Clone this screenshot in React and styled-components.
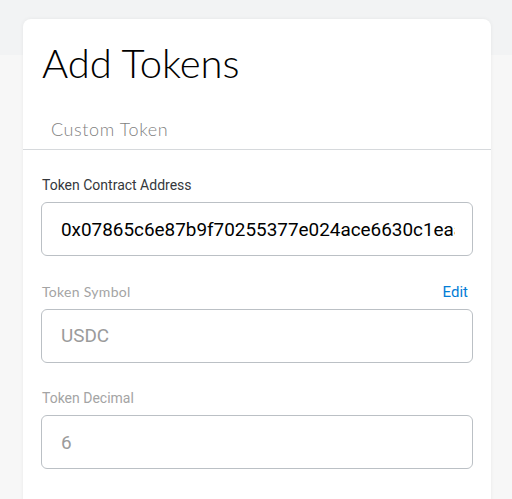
import React from 'react';
import styled, { createGlobalStyle } from 'styled-components';

const GlobalStyle = createGlobalStyle`
  html, body {
    margin: 0;
    padding: 0;
  }
  body {
    background: linear-gradient(#f2f3f4 0, #f2f3f4 55px, #f7f7f7 55px);
    min-height: 499px;
    overflow: hidden;
  }
`;

const Page = styled.div`
  padding: 19px 21px 0 23px;
`;

const Card = styled.section`
  background: #fff;
  border-radius: 8px 8px 0 0;
  box-shadow: 0 0 4px rgba(0, 0, 0, 0.06);
  min-height: 520px;
`;

const Header = styled.header`
  padding: 20px 19px 0;
`;

const Title = styled.h1`
  margin: 0;
  font-family: Lato, 'Noto Sans', sans-serif;
  font-weight: 300;
  font-size: 40px;
  line-height: 48px;
  color: #000;
`;

const Tabs = styled.nav`
  display: flex;
  margin-top: 32px;
  padding-left: 28px;
  border-bottom: 1px solid #d6d9dc;
`;

const Tab = styled.div`
  font-family: Lato, 'Noto Sans', sans-serif;
  font-weight: 300;
  font-size: 18px;
  letter-spacing: 0.6px;
  line-height: 20px;
  color: #7f7f7f;
  padding-bottom: 10px;
`;

const Form = styled.form`
  display: flex;
  flex-direction: column;
  gap: 27.5px;
  padding: 27px 18px 0;
`;

const Field = styled.div`
  display: flex;
  flex-direction: column;
  gap: 9px;
`;

const LabelRow = styled.div`
  display: flex;
  justify-content: space-between;
  align-items: center;
  padding: 0 5px 0 1px;
`;

const Label = styled.label`
  font-family: ${({ $geometric }) => ($geometric ? "Lato, 'Noto Sans'" : 'Roboto')}, sans-serif;
  font-size: 14px;
  letter-spacing: ${({ $geometric }) => ($geometric ? '0.3px' : '0')};
  line-height: 16px;
  color: ${({ $muted }) => ($muted ? '#a4a4a4' : '#35383c')};
`;

const EditLink = styled.a`
  font-family: Roboto, sans-serif;
  font-size: 15px;
  line-height: 16px;
  color: #037dd6;
  cursor: pointer;
`;

const InputBox = styled.div`
  box-sizing: border-box;
  display: flex;
  align-items: center;
  height: 54px;
  padding: 0 17px 0 19px;
  border: 1px solid #bbc0c5;
  border-radius: 6px;
  background: #fff;
`;

const Input = styled.input`
  flex: 1;
  min-width: 0;
  margin: 0;
  padding: 0;
  border: none;
  background: transparent;
  font-family: Roboto, sans-serif;
  font-size: 18.9px;
  color: ${({ $muted }) => ($muted ? '#9b9b9b' : '#000')};
  outline: none;
`;

const fields = [
  { label: 'Token Contract Address', value: '0x07865c6e87b9f70255377e024ace6630c1eaa37f' },
  { label: 'Token Symbol', value: 'USDC', muted: true, geometric: true, edit: true },
  { label: 'Token Decimal', value: '6', muted: true },
];

export default function App() {
  return (
    <>
      <GlobalStyle />
      <Page>
        <Card>
          <Header>
            <Title>Add Tokens</Title>
          </Header>
          <Tabs>
            <Tab>Custom Token</Tab>
          </Tabs>
          <Form onSubmit={(e) => e.preventDefault()}>
            {fields.map((f) => (
              <Field key={f.label}>
                <LabelRow>
                  <Label $muted={f.muted} $geometric={f.geometric}>{f.label}</Label>
                  {f.edit && <EditLink>Edit</EditLink>}
                </LabelRow>
                <InputBox>
                  <Input value={f.value} readOnly $muted={f.muted} />
                </InputBox>
              </Field>
            ))}
          </Form>
        </Card>
      </Page>
    </>
  );
}
